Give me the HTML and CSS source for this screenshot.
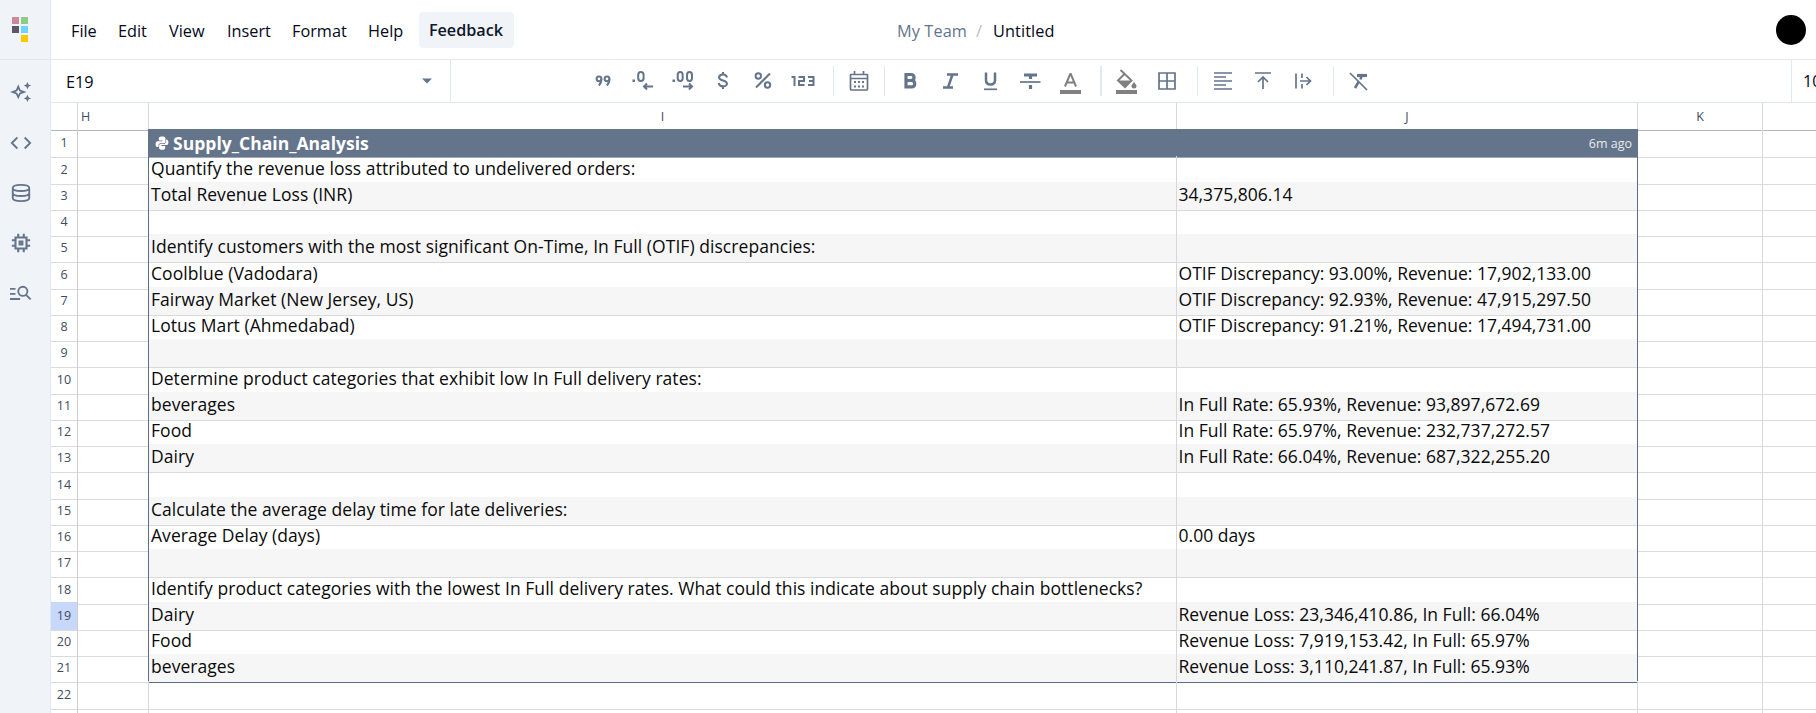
FILE: index.html
```html
<!DOCTYPE html>
<html lang="en">
<head>
<meta charset="utf-8">
<title>Untitled</title>
<link rel="stylesheet" href="styles.css">
</head>
<body>
<div class="app">
  <nav class="sidebar">
    <div class="logo">
      <svg width="18" height="28" viewBox="0 0 18 28"><path fill="#cb8999" d="M1 1h7v7H1z"/><path fill="#8ecb89" d="M10 1h7v7h-7z"/><path fill="#5d576b" d="M1 10h7v7H1z"/><path fill="#6cd4ff" d="M10 10h7v7h-7z"/><path fill="#ffc800" d="M10 19h7v7h-7z"/></svg>
    </div>
    <svg class="side-icon" viewBox="0 0 24 24"><path fill="currentColor" d="m19 9-1.25-2.75L15 5l2.75-1.25L19 1l1.25 2.750L23 5l-2.750 1.250zm0 14-1.250-2.750L15 19l2.750-1.250L19 15l1.250 2.750L23 19l-2.750 1.250zM9 20l-2.500-5.500L0 12l6.500-2.500L9 3.500l2.500 6L18 12l-6.500 2.500zm0-4.850L10 13l2.150-1L10 11 9 8.850 8 11l-2.150 1L8 13z"/></svg>
    <svg class="side-icon" viewBox="0 0 24 24"><path class="stroke" d="m8 6-6 6 6 6M16 6l6 6-6 6"/></svg>
    <svg class="side-icon" viewBox="0 0 24 24"><path class="stroke" d="M3 6.500C3 4.500 7 3.200 12 3.200s9 1.300 9 3.300-4 3.300-9 3.300-9-1.300-9-3.300v11c0 2 4 3.300 9 3.300s9-1.300 9-3.300v-11M3 12c0 2 4 3.300 9 3.300s9-1.300 9-3.300"/></svg>
    <svg class="side-icon" viewBox="0 0 24 24"><path class="chip" d="M6 6h12v12H6zM10.500 10.500h3v3h-3zM9 2v4M15 2v4M9 18v4M15 18v4M2 9h4M2 15h4M18 9h4M18 15h4"/></svg>
    <svg class="side-icon" viewBox="0 0 24 24"><path class="stroke" d="M0 7.500h6M0 13h6M0 18.500h11M17.500 14l5 5"/><circle class="stroke" cx="14" cy="10.200" r="5"/></svg>
  </nav>
  <main class="main">
    <header class="topbar">
      <div class="menus">
        <span class="menu m-file">File</span><span class="menu m-edit">Edit</span><span class="menu m-view">View</span><span class="menu m-insert">Insert</span><span class="menu m-format">Format</span><span class="menu m-help">Help</span><span class="feedback">Feedback</span>
      </div>
      <div class="crumbs"><span class="team">My Team</span><span class="slash">/</span><span>Untitled</span></div>
      <div class="avatar"></div>
    </header>
    <div class="toolbar">
      <div class="namebox"><span>E19</span><svg width="10" height="6" viewBox="0 0 10 6"><path fill="#64748b" d="M0 .5h10L5 5.500z"/></svg></div>
      <div class="tools">
        <svg class="tool" viewBox="0 0 40 42"><g class="thick"><circle cx="16" cy="18.800" r="2.400"/><path d="M18.400 18.800c0 3-.5 5-2.600 6.700"/><circle cx="24" cy="18.800" r="2.400"/><path d="M26.400 18.800c0 3-.5 5-2.600 6.700"/></g></svg>
        <svg class="tool" viewBox="0 0 40 42"><path fill="currentColor" d="M9.500 19.500H12V22H9.500z"/><path class="thick" d="M15.200 15q0-3 2.700-3t2.700 3v3q0 3-2.700 3t-2.700-3zM30 26.500h-9M24 23.500l-3 3 3 3"/></svg>
        <svg class="tool" viewBox="0 0 40 42"><path fill="currentColor" d="M9.500 19.500H12V22H9.500z"/><path class="thick" d="M14.700 15q0-3 2.500-3t2.500 3v3q0 3-2.500 3t-2.500-3zM24 15q0-3 2.500-3t2.500 3v3q0 3-2.500 3T24 18zM20 26.500h9M26 23.500l3 3-3 3"/></svg>
        <svg class="tool" viewBox="0 0 40 42"><path class="thick" d="M24 17.500q-.6-3-4-3t-4 2.700c0 4.200 8 2.300 8 6.600 0 3.400-7.700 3.700-8.300-.8M20 12v3M20 26v3"/></svg>
        <svg class="tool" viewBox="0 0 40 42"><g class="thick"><circle cx="15.300" cy="16" r="2.700"/><circle cx="24.500" cy="25" r="2.700"/><path d="M27 13.500 13 27.500"/></g></svg>
        <svg class="tool" viewBox="0 0 40 42"><path class="thick" d="M8.500 17h3v9M15.500 17h5.500v4h-5v4h5.500M25 17h5.500v8H25M26 21h5"/></svg>
        <i class="sep sep-a"></i>
        <svg class="tool" viewBox="0 0 40 42"><path class="thin" d="M12 14.500h16q.5 0 .5.500v14q0 1-1 1h-15q-1 0-1-1V15q0-.5.5-.5zM11.500 18.500h17M15.500 11v3.500M24.500 11v3.500"/><path fill="currentColor" d="M15 21h2v2h-2zm4 0h2v2h-2zm4 0h2v2h-2zm-8 4.500h2v2h-2zm4 0h2v2h-2zm4 0h2v2h-2z"/></svg>
        <i class="sep sep-b"></i>
        <svg class="tool" viewBox="0 0 40 42"><path class="bold" d="M16 14.500h5q3 0 3 3t-3 3h-5zM16 20.500h5.700q3 0 3 3.200t-3 3.200H16z"/></svg>
        <svg class="tool" viewBox="0 0 40 42"><path class="heavy" d="M17 14.500h11M13 27.500h10M22.500 14.500l-4.500 13"/></svg>
        <svg class="tool" viewBox="0 0 40 42"><path class="heavy" d="M16 12.500V20q0 4.500 4.500 4.500T25 20v-7.500"/><path class="thin" d="M14 29.300h13"/></svg>
        <svg class="tool" viewBox="0 0 40 42"><path class="thin" d="M10 22h20.500"/><path class="bold" d="M14 15h13M20.500 15v4M20.500 25v4"/></svg>
        <svg class="tool" viewBox="0 0 40 42"><path class="grey-thick" d="m15 26.500 5.200-12.500h.6L26 26.500M16.700 22.500H24"/><path fill="#808080" d="M10 30h21v4H10z"/></svg>
        <i class="sep sep-c"></i>
        <svg class="tool" viewBox="0 0 40 42"><path class="grey-thick" d="m13.500 10 11 10.500L18 27l-7-6.500 7-7"/><path fill="#808080" d="M11 20.500h14L18 27zM27 22q2.500 3 2.500 4a2.500 2.500 0 0 1-5 0q0-1 2.500-4zM9 30h21v4H9z"/></svg>
        <svg class="tool" viewBox="0 0 40 42"><path class="thin" d="M12 13h16v16H12zM20 13v16M12 21h16"/></svg>
        <i class="sep sep-d"></i>
        <svg class="tool" viewBox="0 0 40 42"><path class="thin" d="M11 13h18M11 17h12M11 21h18M11 25h12M11 29h18"/></svg>
        <svg class="tool" viewBox="0 0 40 42"><path class="thin" d="M12 13h16M20 29V17.500M15 22l5-5 5 5"/></svg>
        <svg class="tool" viewBox="0 0 40 42"><path class="thin" d="M13 13.500v15M19 13.500V18M19 24v4.500M17 21h10.500M23.500 17l4 4-4 4"/></svg>
        <i class="sep sep-e"></i>
        <svg class="tool" viewBox="0 0 40 42"><path class="thin" d="m11 13 17 17"/><path class="bold" d="M18 15.500h10"/><path class="heavy" d="M22.500 16l-1 3.500M19.500 22l-3.500 6"/></svg>
      </div>
      <div class="zoom">100%</div>
    </div>
    <div class="sheet" id="sheet"></div>
  </main>
</div>
<script src="sheet.js"></script>
</body>
</html>
```
FILE: styles.css
```css
* { box-sizing: border-box; }
body { margin: 0; overflow: hidden; background: #fff; font-family: "Open Sans", "Noto Sans", sans-serif; color: #020817; }
.app { display: flex; width: 1816px; height: 713px; overflow: hidden; }
.sidebar { flex: none; width: 51px; background: #f0f4f9; border-right: 1px solid #e2e8f0; color: #64748b; }
.logo { height: 60px; padding: 16px 0 0 11px; border-bottom: 1px solid #e2e8f0; }
.logo svg { display: block; }
.side-icon { display: block; width: 22px; height: 22px; margin: 0 0 28px 10px; }
.logo + .side-icon { margin-top: 21px; margin-bottom: 29px; }
.stroke { fill: none; stroke: currentColor; stroke-width: 2; }
.chip { fill: none; stroke: currentColor; stroke-width: 2.300; }
.main { flex: none; width: 1765px; }
.topbar { display: flex; align-items: center; height: 60px; border-bottom: 1px solid #e2e8f0; font-size: 16.3px; }
.menus { display: flex; align-items: center; width: 846px; padding-left: 20px; white-space: nowrap; }
.menu { flex: none; padding-top: 2px; }
.m-file { width: 47px; }
.m-edit { width: 51px; }
.m-view { width: 58px; }
.m-insert { width: 65px; }
.m-format { width: 76px; }
.m-help { width: 51px; }
.feedback { width: 95px; height: 36px; margin-top: 1px; line-height: 36px; padding-right: 1px; text-align: center; font-weight: 600; font-size: 16.2px; color: #0f172a; background: #f0f4f9; border-radius: 4px; }
.crumbs { display: flex; flex: 1; padding-top: 2px; white-space: nowrap; letter-spacing: .1px; }
.team { width: 79px; color: #64748b; }
.slash { width: 17px; color: #b6bec9; }
.avatar { width: 30px; height: 30px; margin-right: 10px; border-radius: 50%; background: #000; }
.toolbar { display: flex; height: 43px; border-bottom: 1px solid #e2e8f0; }
.namebox { display: flex; flex: none; align-items: center; justify-content: space-between; width: 400px; padding: 0 18px 0 15px; border-right: 1px solid #e2e8f0; font-size: 16.3px; }
.namebox span { padding-top: 1px; }
.tools { display: flex; flex: none; align-items: center; width: 1340px; padding-left: 132px; color: #64748b; }
.tool { flex: none; width: 40px; height: 42px; }
.sep { flex: none; width: 1px; height: 30px; background: #e2e8f0; }
.sep-a { margin: 0 5px 0 10px; }
.sep-b { margin: 0 5px; }
.sep-c { width: 2px; margin: 0 5px 0 10px; }
.sep-d { margin: 0 5px 0 10px; }
.sep-e { margin: 0 5px 0 10px; }
.thin, .thick, .heavy, .bold, .grey-thick { fill: none; stroke: currentColor; }
.thin { stroke-width: 1.700; }
.thick { stroke-width: 2; }
.heavy { stroke-width: 2.500; }
.bold { stroke-width: 3.200; }
.grey-thick { stroke: #808080; stroke-width: 2; }
.zoom { flex: none; width: 60px; padding-left: 11px; border-left: 1px solid #e2e8f0; font-size: 16.300px; line-height: 43px; }
.row { display: grid; grid-template-columns: 27px 71px 1028px 461px 125px 54px; height: 26.250px; }
.cell { border-right: 1px solid #d5d8dd; border-bottom: 1px solid #d9dadc; padding-left: 1.500px; line-height: 25px; font-size: 17.500px; letter-spacing: .02px; color: #0a0a0a; white-space: nowrap; }
.prompt { letter-spacing: .05px; padding-left: 2px; }
.head .cell { border-bottom-color: #b3b7c1; padding: 0; line-height: 27px; font-size: 12.500px; text-align: center; color: #404b5c; }
.head .first { text-align: left; padding-left: 3px; }
.head { height: 26.250px; }
.row .num { padding: 0; text-align: center; font-size: 12.500px; line-height: 28px; color: #404b5c; border-right-color: #cbcdd2; }
.row .selected { background: #c8d8fb; }
.alt { background: #f6f6f6; }
.edge { border-right-color: #5c6f8a; }
.bottom { border-bottom-color: #5c6f8a; }
.title { display: flex; grid-column: span 2; align-items: center; justify-content: space-between; background: #64748b; border-bottom: 1px solid #a0a8b5; margin-left: -1px; padding: 0 6px 0 7px; color: #fff; }
.title b { display: flex; align-items: center; gap: 4px; font-size: 17.500px; line-height: 24px; letter-spacing: .03px; }
.title span { font-size: 12.500px; color: #e8ebef; }
```
FILE: sheet.js
```js
const rows = [
  null,
  ["Quantify the revenue loss attributed to undelivered orders:", ""],
  ["Total Revenue Loss (INR)", "34,375,806.14"],
  ["", ""],
  ["Identify customers with the most significant On-Time, In Full (OTIF) discrepancies:", ""],
  ["Coolblue (Vadodara)", "OTIF Discrepancy: 93.00%, Revenue: 17,902,133.00"],
  ["Fairway Market (New Jersey, US)", "OTIF Discrepancy: 92.93%, Revenue: 47,915,297.50"],
  ["Lotus Mart (Ahmedabad)", "OTIF Discrepancy: 91.21%, Revenue: 17,494,731.00"],
  ["", ""],
  ["Determine product categories that exhibit low In Full delivery rates:", ""],
  ["beverages", "In Full Rate: 65.93%, Revenue: 93,897,672.69"],
  ["Food", "In Full Rate: 65.97%, Revenue: 232,737,272.57"],
  ["Dairy", "In Full Rate: 66.04%, Revenue: 687,322,255.20"],
  ["", ""],
  ["Calculate the average delay time for late deliveries:", ""],
  ["Average Delay (days)", "0.00 days"],
  ["", ""],
  ["Identify product categories with the lowest In Full delivery rates. What could this indicate about supply chain bottlenecks?", ""],
  ["Dairy", "Revenue Loss: 23,346,410.86, In Full: 66.04%"],
  ["Food", "Revenue Loss: 7,919,153.42, In Full: 65.97%"],
  ["beverages", "Revenue Loss: 3,110,241.87, In Full: 65.93%"],
  ["", ""]
];
const python = '<svg width="14" height="14" viewBox="0 0 24 24"><path fill="#fff" d="M12 1C7 1 6.500 3 6.500 5v2.500H13V9H4.500C2 9 1 11.500 1 14s1 5 3.500 5H6v-3c0-2 1.500-3.500 3.500-3.500h5.500c2 0 3-1.300 3-3V5c0-3-2-4-6-4z"/><path fill="#fff" d="M12 23.500c5 0 5.500-2 5.500-4v-2.500H11v-1.500h8.500c2.500 0 3.500-2 3.500-4.500s-1-5-3.500-5H19v3.500c0 2-1.500 4-3.500 4H10c-2 0-3 1.300-3 3v3.500c0 2.500 2 3.500 5 3.500z"/></svg>';
const cells = (list) => list.map((c) => `<div class="cell ${c[0]}">${c[1]}</div>`).join("");
let html = `<div class="row head">${cells([["", ""], ["first", "H"], ["", "I"], ["", "J"], ["", "K"], ["", ""]])}</div>`;
rows.forEach((row, i) => {
  const n = i + 1;
  const inTable = n <= 21;
  const tint = (inTable && n % 2 ? " alt" : "") + (n === 21 ? " bottom" : "");
  const edge = inTable ? " edge" : "";
  html += `<div class="row">${cells([["num" + (n === 19 ? " selected" : ""), n], [edge, ""]])}`;
  html += row
    ? cells([["prompt" + tint, row[0]], [tint + edge, row[1]]])
    : `<div class="title"><b>${python}Supply_Chain_Analysis</b><span>6m ago</span></div>`;
  html += cells([["", ""], ["", ""]]) + "</div>";
});
html += `<div class="row">${cells([["num", ""], ["", ""], ["", ""], ["", ""], ["", ""], ["", ""]])}</div>`;
document.getElementById("sheet").innerHTML = html;
```
